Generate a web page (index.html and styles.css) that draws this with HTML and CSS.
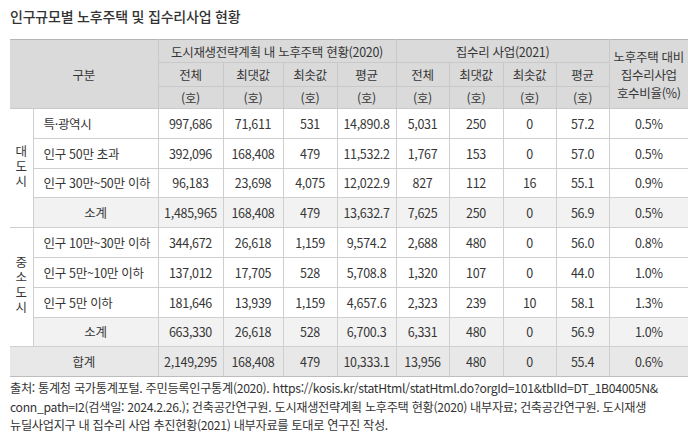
FILE: index.html
```html
<!DOCTYPE html>
<html lang="ko">
<head>
<meta charset="utf-8">
<link rel="stylesheet" href="styles.css">
</head>
<body>
<h1 class="title">인구규모별 노후주택 및 집수리사업 현황</h1>
<table class="tbl">
  <colgroup>
    <col class="c1"><col class="c2"><col class="c3"><col class="c4"><col class="c5"><col class="c6"><col class="c7"><col class="c8"><col class="c9"><col class="c10"><col class="c11">
  </colgroup>
  <thead>
    <tr class="h1">
      <th colspan="2" rowspan="3">구분</th>
      <th colspan="4">도시재생전략계획 내 노후주택 현황(2020)</th>
      <th colspan="4">집수리 사업(2021)</th>
      <th rowspan="3" class="ratio">노후주택 대비<br>집수리사업<br>호수비율(%)</th>
    </tr>
    <tr class="h2">
      <th>전체</th><th>최댓값</th><th>최솟값</th><th>평균</th>
      <th>전체</th><th>최댓값</th><th>최솟값</th><th>평균</th>
    </tr>
    <tr class="h3">
      <th>(호)</th><th>(호)</th><th>(호)</th><th>(호)</th>
      <th>(호)</th><th>(호)</th><th>(호)</th><th>(호)</th>
    </tr>
  </thead>
  <tbody>
    <tr class="r r1">
      <td rowspan="4" class="grp"><span class="vt">대도시</span></td>
      <td class="lbl">특·광역시</td><td>997,686</td><td>71,611</td><td>531</td><td>14,890.8</td><td>5,031</td><td>250</td><td>0</td><td>57.2</td><td>0.5%</td>
    </tr>
    <tr class="r">
      <td class="lbl">인구 50만 초과</td><td>392,096</td><td>168,408</td><td>479</td><td>11,532.2</td><td>1,767</td><td>153</td><td>0</td><td>57.0</td><td>0.5%</td>
    </tr>
    <tr class="r">
      <td class="lbl">인구 30만~50만 이하</td><td>96,183</td><td>23,698</td><td>4,075</td><td>12,022.9</td><td>827</td><td>112</td><td>16</td><td>55.1</td><td>0.9%</td>
    </tr>
    <tr class="r sub">
      <td>소계</td><td>1,485,965</td><td>168,408</td><td>479</td><td>13,632.7</td><td>7,625</td><td>250</td><td>0</td><td>56.9</td><td>0.5%</td>
    </tr>
    <tr class="r">
      <td rowspan="4" class="grp"><span class="vt">중소도시</span></td>
      <td class="lbl">인구 10만~30만 이하</td><td>344,672</td><td>26,618</td><td>1,159</td><td>9,574.2</td><td>2,688</td><td>480</td><td>0</td><td>56.0</td><td>0.8%</td>
    </tr>
    <tr class="r">
      <td class="lbl">인구 5만~10만 이하</td><td>137,012</td><td>17,705</td><td>528</td><td>5,708.8</td><td>1,320</td><td>107</td><td>0</td><td>44.0</td><td>1.0%</td>
    </tr>
    <tr class="r">
      <td class="lbl">인구 5만 이하</td><td>181,646</td><td>13,939</td><td>1,159</td><td>4,657.6</td><td>2,323</td><td>239</td><td>10</td><td>58.1</td><td>1.3%</td>
    </tr>
    <tr class="r sub">
      <td>소계</td><td>663,330</td><td>26,618</td><td>528</td><td>6,700.3</td><td>6,331</td><td>480</td><td>0</td><td>56.9</td><td>1.0%</td>
    </tr>
    <tr class="r total">
      <td colspan="2">합계</td><td>2,149,295</td><td>168,408</td><td>479</td><td>10,333.1</td><td>13,956</td><td>480</td><td>0</td><td>55.4</td><td>0.6%</td>
    </tr>
  </tbody>
</table>
<p class="note">출처: 통계청 국가통계포털. 주민등록인구통계(2020). https://kosis.kr/statHtml/statHtml.do?orgId=101&amp;tblId=DT_1B04005N&amp;<br>conn_path=I2(검색일: 2024.2.26.); 건축공간연구원. 도시재생전략계획 노후주택 현황(2020) 내부자료; 건축공간연구원. 도시재생<br>뉴딜사업지구 내 집수리 사업 추진현황(2021) 내부자료를 토대로 연구진 작성.</p>
</body>
</html>
```

FILE: styles.css
```css
html, body {
  margin: 0;
  padding: 0;
  background: #fff;
}
body {
  font-family: "Noto Sans CJK KR", "Noto Sans", sans-serif;
  color: #363636;
  padding: 0 0 0 10px;
}
.title {
  margin: 0;
  padding-top: 7px;
  height: 32px;
  box-sizing: border-box;
  font-size: 14px;
  font-weight: 500;
  line-height: 18px;
  color: #333;
  letter-spacing: -0.2px;
}
.tbl {
  margin-top: 7px;
  width: 678px;
  border-collapse: collapse;
  table-layout: fixed;
  font-size: 12.5px;
  letter-spacing: -0.3px;
}
.c1 { width: 23px; }
.c2 { width: 125px; }
.c3 { width: 65px; }
.c4 { width: 60px; }
.c5 { width: 54px; }
.c6 { width: 59px; }
.c7 { width: 53px; }
.c8 { width: 54px; }
.c9 { width: 53px; }
.c10 { width: 53px; }
.c11 { width: 79px; }
.tbl th {
  background: #dadada;
  font-weight: 400;
  padding: 0;
  border: 1px solid #c9c9c9;
  line-height: 15px;
  text-align: center;
}
.tbl thead tr:first-child th {
  border-top: 1px solid #b5b5b5;
}
.tbl th:first-child { border-left: none; }
.tbl th.ratio { border-right: none; line-height: 18px; padding-top: 1px; }
.h1 { height: 23px; }
.h2 { height: 24px; }
.h3 { height: 22px; }
.tbl td {
  padding: 0;
  border: 1px solid #cfcfcf;
  text-align: center;
  line-height: 15px;
}
.tbl tr td:last-child { border-right: none; }
.tbl td.grp { border-left: none; }
.vt {
  display: inline-block;
  writing-mode: vertical-rl;
  text-orientation: upright;
  letter-spacing: 2.5px;
  line-height: 15px;
}
.tbl td.lbl { text-align: left; padding-left: 10px; }
.r { height: 29.8px; }
.sub td { background: #f2f2f2; }
.sub td.grp { background: #fff; }
.total td { background: #e8e8e8; border-bottom: 1px solid #bdbdbd; }
.total td:first-child { border-left: none; }
.note {
  margin: 2px 0 0;
  font-size: 12.2px;
  line-height: 18.5px;
  color: #333;
  letter-spacing: -0.3px;
  white-space: nowrap;
}
```
